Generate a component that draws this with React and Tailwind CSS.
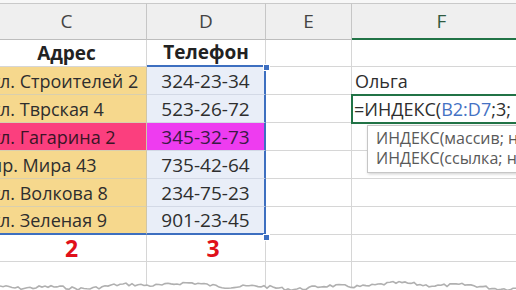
import React from "react";

const ROWS = [
  { addr: "ул. Строителей 2", phone: "324-23-34" },
  { addr: "ул. Тврская 4", phone: "523-26-72" },
  { addr: "ул. Гагарина 2", phone: "345-32-73", hot: true },
  { addr: "пр. Мира 43", phone: "735-42-64" },
  { addr: "ул. Волкова 8", phone: "234-75-23" },
  { addr: "ул. Зеленая 9", phone: "901-23-45" },
];

// jagged torn-paper edge along the bottom
function tornPath() {
  let seed = 7;
  const rnd = () => {
    seed = (seed * 9301 + 49297) % 233280;
    return seed / 233280;
  };
  const pts = [];
  for (let x = 0; x <= 520; x += 3) {
    const wave = Math.sin(x / 37) * 2 + Math.sin(x / 11) * 1.2;
    const y = 10 + wave + (rnd() - 0.5) * 3;
    pts.push([x, y]);
  }
  const line = pts.map(([x, y], i) => `${i ? "L" : "M"}${x} ${y.toFixed(1)}`).join(" ");
  return { line, fill: `${line} L520 30 L0 30 Z` };
}

function TornEdge() {
  const { line, fill } = tornPath();
  return (
    <svg className="absolute left-0 bottom-0" width="516" height="22" viewBox="0 0 516 22">
      <path d={fill} transform="translate(0 8)" fill="#ffffff" />
      <path d={line} transform="translate(0 8)" fill="none" stroke="#b0b0b0" strokeWidth="1.6" />
    </svg>
  );
}

function Handle({ className }) {
  return <div className={`absolute w-[7px] h-[7px] bg-[#3d6fc0] border border-white ${className}`} />;
}

export default function App() {
  return (
    <div
      className="relative w-[516px] h-[290px] overflow-hidden bg-white text-[#2e2e2e]"
      style={{ fontFamily: '"Open Sans", "Noto Sans", sans-serif' }}
    >
      <div className="h-[3px] bg-[#f7f7f7]" />
      <div className="-ml-[13px] w-[545px] grid grid-cols-[160px_119px_86px_180px]">
        {/* column letters */}
        {["C", "D", "E", "F"].map((l) => (
          <div
            key={l}
            className={`h-[37px] flex items-center justify-center text-[19px] bg-[#efefef] border-t border-t-[#c9c9c9] border-r border-r-[#c6c6c6] ${
              l === "F" ? "border-b-2 border-b-[#217346] text-[#2f5a40] bg-[#e6e6e6]" : "border-b border-b-[#bdbdbd] text-[#444444]"
            }`}
          >
            {l}
          </div>
        ))}

        {/* header row */}
        <div className="h-[27px] flex items-end justify-center font-bold text-[19px] leading-[26px] text-[#222222] border-r border-b border-[#d6d6d6]">
          Адрес
        </div>
        <div className="h-[27px] flex items-end justify-center font-bold text-[19px] leading-[26px] text-[#222222] border-r border-[#d6d6d6] border-b-2 border-b-[#3d6fc0]">
          Телефон
        </div>
        <div className="h-[27px] border-r border-b border-[#d6d6d6]" />
        <div className="h-[27px] border-r border-b border-[#d6d6d6]" />

        {ROWS.map((r, i) => {
          const last = i === ROWS.length - 1;
          return (
            <React.Fragment key={r.addr}>
              <div
                className={`h-[28px] flex items-end pl-[4px] text-[18px] leading-[26px] whitespace-nowrap border-r border-r-[#d0c6a8] ${
                  r.hot ? "bg-[#fb3f7e] text-[#3a1526]" : "bg-[#f6d88d] text-[#2e2e2e]"
                } ${last ? "border-b-2 border-b-[#3d6fc0]" : "border-b border-b-[#d9cfae]"}`}
              >
                {r.addr}
              </div>
              <div
                className={`h-[28px] flex items-end justify-center text-[19px] leading-[26px] border-r-2 border-r-[#3d6fc0] ${
                  r.hot ? "bg-[#ee3cf0] text-[#3a1a45]" : "bg-[#e9eef8] text-[#2e2e2e]"
                } ${last ? "border-b-2 border-b-[#3d6fc0]" : "border-b border-b-[#d3d9e6]"}`}
              >
                {r.phone}
              </div>
              <div className="h-[28px] border-r border-b border-[#d6d6d6]" />
              <div className="relative h-[28px] flex items-end pl-[2px] text-[18px] leading-[26px] whitespace-nowrap border-r border-b border-[#d6d6d6]">
                {i === 0 && <span className="pl-[1px]">Ольга</span>}
                {i === 1 && (
                  <>
                    <div className="absolute -left-[1px] -top-[1px] w-[200px] h-[30px] border-2 border-[#217346]" />
                    <span>
                      =ИНДЕКС(<span className="text-[#4472c4]">B2:D7</span>;3;
                    </span>
                  </>
                )}
              </div>
            </React.Fragment>
          );
        })}

        {/* numbers row */}
        <div className="h-[27px] flex items-center justify-center pl-[10px] font-bold text-[23px] text-[#e0101a] border-r border-b border-[#d6d6d6]">
          2
        </div>
        <div className="h-[27px] flex items-center justify-center pl-[14px] font-bold text-[23px] text-[#e0101a] border-r border-b border-[#d6d6d6]">
          3
        </div>
        <div className="h-[27px] border-r border-b border-[#d6d6d6]" />
        <div className="h-[27px] border-r border-b border-[#d6d6d6]" />

        <div className="h-[30px] border-r border-[#d6d6d6]" />
        <div className="h-[30px] border-r border-[#d6d6d6]" />
        <div className="h-[30px] border-r border-[#d6d6d6]" />
        <div className="h-[30px] border-r border-[#d6d6d6]" />
      </div>

      <Handle className="left-[263px] top-[64px]" />
      <Handle className="left-[263px] top-[234px]" />

      {/* function tooltip */}
      <div className="absolute left-[367px] top-[125px] w-[170px] h-[48px] bg-white border border-[#c6c6c6] shadow-[1px_1px_3px_rgba(0,0,0,0.2)] pl-[8px] pt-[2px] text-[16px] leading-[20px] text-[#595959] whitespace-nowrap">
        <div>ИНДЕКС(массив; н</div>
        <div>ИНДЕКС(ссылка; н</div>
      </div>

      <TornEdge />
    </div>
  );
}
